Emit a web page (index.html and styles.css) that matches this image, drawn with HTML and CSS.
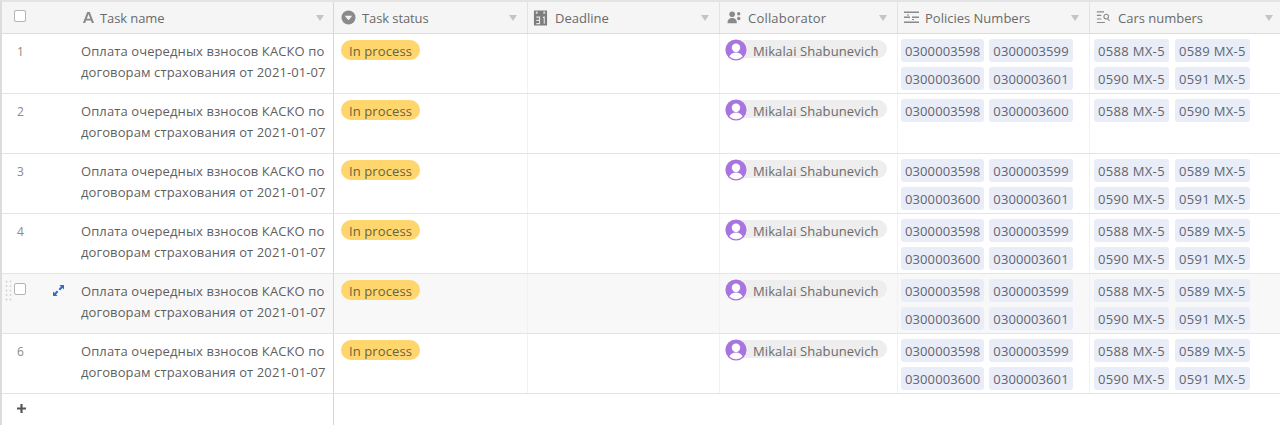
FILE: index.html
```html
<!DOCTYPE html>
<html lang="ru">
<head>
<meta charset="utf-8">
<title>Tasks</title>
<link rel="stylesheet" href="styles.css">
</head>
<body>
<svg class="defs" width="0" height="0" aria-hidden="true">
  <symbol id="caret" viewBox="0 0 8 6"><path d="M0 0h8L4 6z"/></symbol>
  <symbol id="avatar" viewBox="0 0 24 24">
    <circle cx="12" cy="12" r="11.500" fill="#a875e0"/>
    <circle cx="12" cy="9.600" r="4.600" fill="#fff"/>
    <path d="M4.800 19.200c1.300-3.200 4-4.400 7.200-4.400s5.900 1.200 7.200 4.400A10 10 0 0 1 12 22a10 10 0 0 1-7.200-2.800z" fill="#fff"/>
  </symbol>
</svg>
<main class="table">
  <div class="row head">
    <div class="c check"><span class="box"></span></div>
    <div class="c name hcell">
      <svg class="ico narrow" viewBox="0 0 14 14"><path d="M5.600 1h2.800l4.600 12h-2.400l-1-2.800H4.400l-1 2.800H1zM5.100 8.300h3.800L7 3.200z"/></svg>
      <span class="label">Task name</span><svg class="caret"><use href="#caret"/></svg>
    </div>
    <div class="c status hcell">
      <svg class="ico" viewBox="0 0 16 16"><circle cx="8" cy="8" r="7.500"/><path d="M4 6h8L8 11z" fill="#f5f5f5"/></svg>
      <span class="label">Task status</span><svg class="caret"><use href="#caret"/></svg>
    </div>
    <div class="c deadline hcell">
      <svg class="ico cal" viewBox="0 0 16 16"><path d="M1 0h14v16H1z"/><path d="M3 1h2v2.500H3zM11 1h2v2.500h-2z" fill="#d8d8d8"/><path d="M3.500 7h3.500v7H3.500M3.500 10.500H7M10.500 7.500l1.500-.5v7" fill="none" stroke="#e6e6e6" stroke-width="1.200"/></svg>
      <span class="label">Deadline</span><svg class="caret"><use href="#caret"/></svg>
    </div>
    <div class="c collab hcell">
      <svg class="ico" viewBox="0 0 16 16"><circle cx="5.500" cy="4.500" r="3"/><path d="M0.500 14c0-4 2-5.500 5-5.500s5 1.500 5 5.500z"/><circle cx="12.500" cy="4" r="1.800"/><circle cx="12.500" cy="9" r="1.800"/></svg>
      <span class="label">Collaborator</span><svg class="caret"><use href="#caret"/></svg>
    </div>
    <div class="c policies hcell">
      <svg class="ico wide" viewBox="0 0 16 14"><path d="M1 1h15v1.400H1zM1 6h6v1.400H1zM9 6h7v1.400H9zM1 11h15v1.400H1zM4 4h2v1H4zM9 8.500h2v1H9z"/></svg>
      <span class="label">Policies Numbers</span><svg class="caret"><use href="#caret"/></svg>
    </div>
    <div class="c cars hcell">
      <svg class="ico wide" viewBox="0 0 18 14"><path d="M1 0h8v1.300H1zM1 4h5v1.300H1zM1 8h5v1.300H1zM1 12h9v1.300H1z"/><circle cx="11.500" cy="6" r="2.600" fill="none" stroke="#8a8a8a" stroke-width="1.200"/><path d="M13.300 8l2.400 2.300-.8.800L12.500 8.800z"/></svg>
      <span class="label">Cars numbers</span><svg class="caret"><use href="#caret"/></svg>
    </div>
  </div>

  <div class="row">
    <div class="c check"><span class="num">1</span></div>
    <div class="c name">Оплата очередных взносов КАСКО по договорам страхования от 2021-01-07</div>
    <div class="c status"><span class="pill">In process</span></div>
    <div class="c deadline"></div>
    <div class="c collab"><span class="person"><svg class="avatar"><use href="#avatar"/></svg>Mikalai Shabunevich</span></div>
    <div class="c policies tags"><span class="tag">0300003598</span><span class="tag">0300003599</span><span class="tag">0300003600</span><span class="tag">0300003601</span></div>
    <div class="c cars tags"><span class="tag">0588 MX-5</span><span class="tag">0589 MX-5</span><span class="tag">0590 MX-5</span><span class="tag">0591 MX-5</span></div>
  </div>

  <div class="row">
    <div class="c check"><span class="num">2</span></div>
    <div class="c name">Оплата очередных взносов КАСКО по договорам страхования от 2021-01-07</div>
    <div class="c status"><span class="pill">In process</span></div>
    <div class="c deadline"></div>
    <div class="c collab"><span class="person"><svg class="avatar"><use href="#avatar"/></svg>Mikalai Shabunevich</span></div>
    <div class="c policies tags"><span class="tag">0300003598</span><span class="tag">0300003600</span></div>
    <div class="c cars tags"><span class="tag">0588 MX-5</span><span class="tag">0590 MX-5</span></div>
  </div>

  <div class="row">
    <div class="c check"><span class="num">3</span></div>
    <div class="c name">Оплата очередных взносов КАСКО по договорам страхования от 2021-01-07</div>
    <div class="c status"><span class="pill">In process</span></div>
    <div class="c deadline"></div>
    <div class="c collab"><span class="person"><svg class="avatar"><use href="#avatar"/></svg>Mikalai Shabunevich</span></div>
    <div class="c policies tags"><span class="tag">0300003598</span><span class="tag">0300003599</span><span class="tag">0300003600</span><span class="tag">0300003601</span></div>
    <div class="c cars tags"><span class="tag">0588 MX-5</span><span class="tag">0589 MX-5</span><span class="tag">0590 MX-5</span><span class="tag">0591 MX-5</span></div>
  </div>

  <div class="row">
    <div class="c check"><span class="num">4</span></div>
    <div class="c name">Оплата очередных взносов КАСКО по договорам страхования от 2021-01-07</div>
    <div class="c status"><span class="pill">In process</span></div>
    <div class="c deadline"></div>
    <div class="c collab"><span class="person"><svg class="avatar"><use href="#avatar"/></svg>Mikalai Shabunevich</span></div>
    <div class="c policies tags"><span class="tag">0300003598</span><span class="tag">0300003599</span><span class="tag">0300003600</span><span class="tag">0300003601</span></div>
    <div class="c cars tags"><span class="tag">0588 MX-5</span><span class="tag">0589 MX-5</span><span class="tag">0590 MX-5</span><span class="tag">0591 MX-5</span></div>
  </div>

  <div class="row hover">
    <div class="c check hovered">
      <svg class="grip" viewBox="0 0 8 24"><g fill="#d4d4d4"><circle cx="1.500" cy="1.500" r="1"/><circle cx="5.500" cy="1.500" r="1"/><circle cx="1.500" cy="6" r="1"/><circle cx="5.500" cy="6" r="1"/><circle cx="1.500" cy="10.500" r="1"/><circle cx="5.500" cy="10.500" r="1"/><circle cx="1.500" cy="15" r="1"/><circle cx="5.500" cy="15" r="1"/><circle cx="1.500" cy="19.500" r="1"/><circle cx="5.500" cy="19.500" r="1"/></g></svg>
      <span class="box"></span>
      <svg class="expand" viewBox="0 0 12 12"><path d="M7 0h5v5l-1.700-1.700-2.600 2.600-1.600-1.600 2.600-2.600zM5 12H0V7l1.700 1.700 2.600-2.600 1.600 1.600-2.600 2.600z"/></svg>
    </div>
    <div class="c name">Оплата очередных взносов КАСКО по договорам страхования от 2021-01-07</div>
    <div class="c status"><span class="pill">In process</span></div>
    <div class="c deadline"></div>
    <div class="c collab"><span class="person"><svg class="avatar"><use href="#avatar"/></svg>Mikalai Shabunevich</span></div>
    <div class="c policies tags"><span class="tag">0300003598</span><span class="tag">0300003599</span><span class="tag">0300003600</span><span class="tag">0300003601</span></div>
    <div class="c cars tags"><span class="tag">0588 MX-5</span><span class="tag">0589 MX-5</span><span class="tag">0590 MX-5</span><span class="tag">0591 MX-5</span></div>
  </div>

  <div class="row">
    <div class="c check"><span class="num">6</span></div>
    <div class="c name">Оплата очередных взносов КАСКО по договорам страхования от 2021-01-07</div>
    <div class="c status"><span class="pill">In process</span></div>
    <div class="c deadline"></div>
    <div class="c collab"><span class="person"><svg class="avatar"><use href="#avatar"/></svg>Mikalai Shabunevich</span></div>
    <div class="c policies tags"><span class="tag">0300003598</span><span class="tag">0300003599</span><span class="tag">0300003600</span><span class="tag">0300003601</span></div>
    <div class="c cars tags"><span class="tag">0588 MX-5</span><span class="tag">0589 MX-5</span><span class="tag">0590 MX-5</span><span class="tag">0591 MX-5</span></div>
  </div>

  <div class="add-row">
    <div class="add-cell"><svg class="plus" viewBox="0 0 10 10"><path d="M3.800 0h2.400v3.800H10v2.400H6.200V10H3.800V6.200H0V3.800h3.800z"/></svg></div>
  </div>
</main>
</body>
</html>
```

FILE: styles.css
```css
* { box-sizing: border-box; }
html, body { margin: 0; height: 100%; background: #fff; overflow: hidden; }
body { font-family: "Open Sans", "Noto Sans", sans-serif; font-size: 13px; color: #6b6b6b; }
.defs { position: absolute; }

.table {
  height: 425px;
  border-left: 2px solid #dcdcdc;
  border-top: 2px solid #e4e4e4;
  display: flex;
  flex-direction: column;
}

.row {
  display: grid;
  grid-template-columns: 66px 266px 194px 192px 178px 192px 1fr;
  height: 60px;
  border-bottom: 1px solid #e4e4e4;
}
.row.head { height: 32px; background: #f5f5f5; border-bottom-color: #dcdcdc; }
.row.hover { background: #f8f8f8; }

.c { border-right: 1px solid #f1f1f1; min-width: 0; }
.name { border-right: 1px solid #d6d6d6; }
.row.head .c { border-right-color: #e2e2e2; }
.row.head .name { border-right-color: #d6d6d6; }
.cars { border-right: 0; }
.check { border-right: 0; padding: 8px 0 0 12px; display: flex; align-items: flex-start; gap: 27px; }
.check.hovered { position: relative; padding-top: 9px; }
.head .check { padding-top: 8px; }

.box {
  flex: none;
  width: 12px;
  height: 12px;
  border: 1px solid #b4b4b4;
  border-radius: 2px;
  background: #fff;
}
.num { font-size: 12px; color: #8a8a8a; padding: 1px 0 0 3px; line-height: 18px; }
.grip { position: absolute; left: 3px; top: 2px; width: 8px; height: 32px; }
.expand { width: 11px; height: 11px; flex: none; margin-top: 2px; fill: #2a6fc9; }

.hcell { display: flex; align-items: center; height: 31px; line-height: 18px; }
.ico { flex: none; width: 15px; height: 15px; fill: #8a8a8a; margin-right: 6px; }
.ico.wide { width: 16px; }
.ico.narrow { width: 13px; height: 13px; margin-right: 5px; }
.ico.cal { height: 16px; margin-right: 7px; fill: #7d7d7d; }
.label { flex: 1; color: #6a6a6a; white-space: nowrap; }
.collab .label { letter-spacing: 0.2px; }
.status .label, .name .label { letter-spacing: -0.1px; }
.caret { flex: none; width: 8px; height: 6px; fill: #c4c4c4; }

.name { padding: 7px 4px 0 13px; line-height: 20.500px; color: #5f5f5f; letter-spacing: 0.1px; }
.head .name { padding: 0 9px 0 14px; line-height: 18px; }
.status { padding: 6px 0 0 7px; }
.head .status { padding: 0 10px 0 7px; }
.head .deadline { padding: 0 10px 0 5px; }

.pill {
  display: inline-block;
  height: 20px;
  line-height: 22px;
  padding: 0 8px;
  border-radius: 10px;
  background: #ffd66e;
  color: #6b6242;
  letter-spacing: 0.1px;
}

.collab { padding: 5px 0 0 5px; }
.head .collab { padding: 0 10px 0 7px; }
.person {
  display: inline-flex;
  align-items: center;
  height: 18px;
  margin-top: 1px;
  padding: 4px 8px 0 0;
  border-radius: 9px;
  background: #eeeeee;
  white-space: nowrap;
  letter-spacing: 0.1px;
}
.avatar { width: 22px; height: 22px; margin: -2px 6px 0 0; flex: none; }

.tags {
  display: flex;
  flex-wrap: wrap;
  align-content: flex-start;
  gap: 5px;
  padding: 5px 4px 0 3px;
}
.tag {
  height: 23px;
  line-height: 25px;
  padding: 0 4px;
  border-radius: 3px;
  background: #e9edf7;
  color: #5f6670;
  white-space: nowrap;
  letter-spacing: 0.1px;
}
.cars.tags { padding-left: 4px; gap: 5px 6px; }
.cars .tag { letter-spacing: 0.33px; }
.head .policies { padding: 0 10px 0 5px; }
.head .cars { padding: 0 7px 0 6px; }

.add-row { flex: 1; }
.add-cell { width: 332px; height: 100%; border-right: 1px solid #d6d6d6; padding: 10px 0 0 15px; }
.plus { display: block; width: 9px; height: 9px; fill: #555; }
```
